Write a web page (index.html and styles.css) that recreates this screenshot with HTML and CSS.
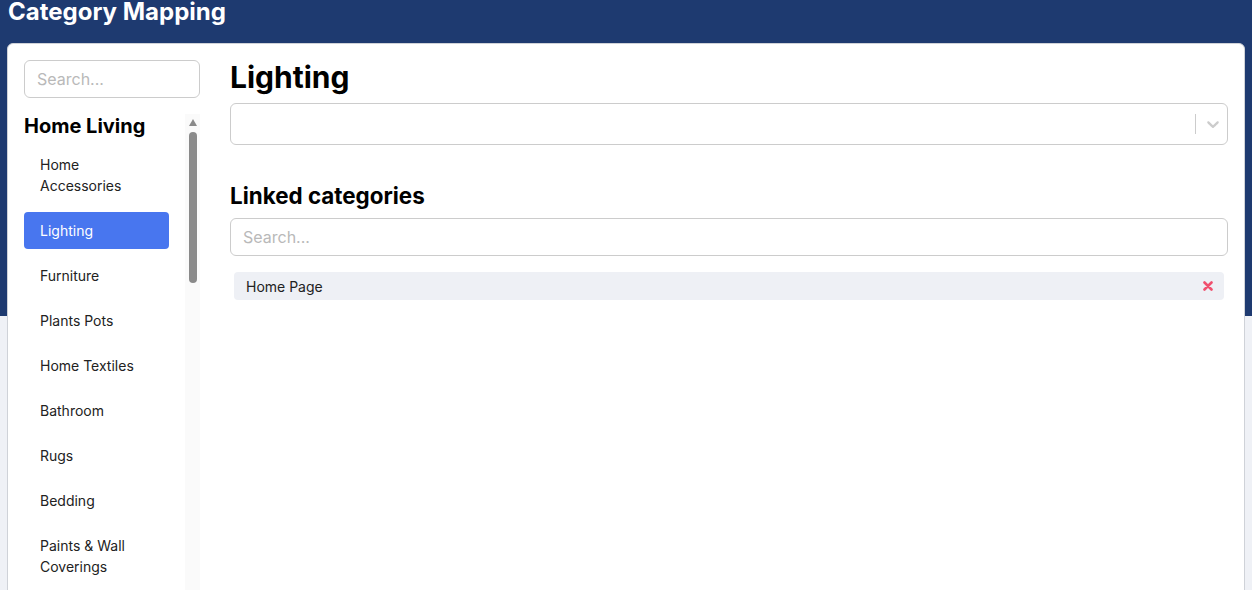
FILE: index.html
```html
<!DOCTYPE html>
<html lang="en">
<head>
<meta charset="utf-8">
<title>Category Mapping</title>
<link rel="stylesheet" href="styles.css">
</head>
<body>
<h1 class="page-title">Category Mapping</h1>
<div class="card">
  <aside class="sidebar">
    <input class="input" type="text" placeholder="Search...">
    <div class="tree">
      <div class="tree-content">
        <h3 class="group-title">Home Living</h3>
        <ul class="cat-list">
          <li class="cat">Home Accessories</li>
          <li class="cat active">Lighting</li>
          <li class="cat">Furniture</li>
          <li class="cat">Plants Pots</li>
          <li class="cat">Home Textiles</li>
          <li class="cat">Bathroom</li>
          <li class="cat">Rugs</li>
          <li class="cat">Bedding</li>
          <li class="cat">Paints &amp; Wall Coverings</li>
        </ul>
      </div>
      <div class="scrollbar" aria-hidden="true">
        <span class="scroll-arrow"></span>
        <span class="scroll-thumb"></span>
      </div>
    </div>
  </aside>
  <main class="main">
    <h2 class="cat-title">Lighting</h2>
    <div class="select">
      <div class="select-value"></div>
      <div class="select-indicators">
        <span class="select-sep"></span>
        <svg class="chevron" width="20" height="20" viewBox="0 0 20 20"><path d="M4.516 7.548c0.436-0.446 1.043-0.481 1.576 0l3.908 3.747 3.908-3.747c0.533-0.481 1.141-0.446 1.574 0 0.436 0.445 0.408 1.197 0 1.615-0.406 0.418-4.695 4.502-4.695 4.502-0.217 0.223-0.502 0.335-0.787 0.335s-0.57-0.112-0.789-0.335c0 0-4.287-4.084-4.695-4.502s-0.436-1.17 0-1.615z" fill="#ccc"/></svg>
      </div>
    </div>
    <h3 class="section-title">Linked categories</h3>
    <input class="input" type="text" placeholder="Search...">
    <ul class="linked">
      <li class="chip"><span>Home Page</span><svg class="remove" width="10" height="10" viewBox="0 0 10 10"><path d="M1.5 1.5L8.5 8.5M8.5 1.5L1.5 8.5" stroke="#f0506e" stroke-width="2.6" stroke-linecap="round"/></svg></li>
    </ul>
  </main>
</div>
</body>
</html>
```
FILE: styles.css
```css
* { box-sizing: border-box; }
html, body { height: 100%; }
body {
  margin: 0;
  font-family: Inter, "Noto Sans", sans-serif;
  color: #222;
  background: linear-gradient(#1e3a70 0, #1e3a70 316px, #eff1f6 316px);
  overflow: hidden;
}
.page-title {
  margin: 0;
  padding: 0 8px;
  font-size: 24px;
  line-height: 24px;
  font-weight: 700;
  color: #fff;
  height: 43px;
}
.card {
  margin: 0 7px;
  background: #fff;
  border: 1px solid #cfd2d8;
  border-radius: 6px;
  padding: 16px;
  display: grid;
  grid-template-columns: 176px 1fr;
  column-gap: 30px;
  height: 620px;
}
.input {
  display: block;
  flex-shrink: 0;
  width: 100%;
  height: 38px;
  border: 1px solid #ccc;
  border-radius: 6px;
  padding: 0 12px;
  font-family: inherit;
  font-size: 16px;
  color: #222;
  outline: none;
}
.input::placeholder { color: #b9b9b9; }
.sidebar { display: flex; flex-direction: column; min-height: 0; }
.tree {
  margin-top: 16px;
  flex: 1;
  min-height: 0;
  display: flex;
  overflow: hidden;
}
.tree-content { flex: 1; min-width: 0; }
.group-title {
  margin: 0 0 8px;
  font-size: 20px;
  line-height: 24px;
  font-weight: 700;
  color: #000;
}
.cat-list { list-style: none; margin: 0; padding: 0 16px 0 0; }
.cat {
  padding: 8px 16px;
  margin-bottom: 8px;
  font-size: 14px;
  line-height: 21px;
  color: #222;
  border-radius: 4px;
}
.cat.active { background: #4876ef; color: #fff; }
.scrollbar {
  width: 15px;
  flex-shrink: 0;
  background: #fafafa;
  display: flex;
  flex-direction: column;
  align-items: center;
  padding-top: 5px;
}
.scroll-arrow {
  width: 0;
  height: 0;
  border-left: 4.5px solid transparent;
  border-right: 4.5px solid transparent;
  border-bottom: 7px solid #8a8a8a;
}
.scroll-thumb {
  margin-top: 6px;
  width: 8px;
  height: 151px;
  border-radius: 4px;
  background: #8a8a8a;
}
.main { min-width: 0; }
.cat-title {
  margin: 0 0 9px;
  font-size: 30px;
  line-height: 34px;
  font-weight: 700;
  color: #000;
}
.select {
  height: 42px;
  border: 1px solid #ccc;
  border-radius: 6px;
  display: flex;
  align-items: center;
}
.select-value { flex: 1; }
.select-indicators { display: flex; align-items: center; height: 100%; }
.select-sep { width: 1px; height: 20px; background: #ccc; }
.chevron { margin: 0 4px 0 7px; display: block; }
.section-title {
  margin: 37px 0 8px;
  font-size: 22.4px;
  line-height: 28px;
  font-weight: 700;
  color: #000;
}
.linked { list-style: none; margin: 16px 4px 0; padding: 0; }
.chip {
  display: flex;
  justify-content: space-between;
  align-items: center;
  height: 28px;
  padding: 0 11px 0 12px;
  background: #eef0f5;
  border-radius: 4px;
  font-size: 14px;
  color: #222;
}
.remove { display: block; }
```
